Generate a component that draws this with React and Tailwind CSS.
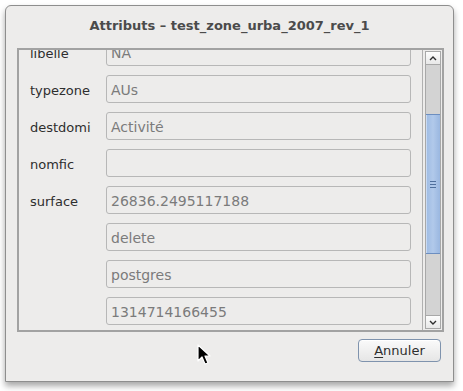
import React from "react";

const rows = [
  { label: "libelle", value: "NA" },
  { label: "typezone", value: "AUs" },
  { label: "destdomi", value: "Activité" },
  { label: "nomfic", value: "" },
  { label: "surface", value: "26836.2495117188" },
  { label: "", value: "delete" },
  { label: "", value: "postgres" },
  { label: "", value: "1314714166455" },
];

const Cursor = () => (
  <svg className="absolute left-[197px] top-[344px]" width="16" height="22" viewBox="0 0 16 22">
    <path d="M1 1 L1 17 L5 13 L8 20 L11 19 L8 12 L13 12 Z" fill="#000" stroke="#fff" strokeWidth="1.2" strokeLinejoin="round" />
  </svg>
);

const Scrollbar = () => (
  <div className="w-[16px] my-[1px] mr-[1px] flex flex-col border border-[#a8a8a8] bg-[#d3d3d3]">
    <div className="h-[13px] flex items-center justify-center bg-gradient-to-b from-[#fdfdfd] to-[#e8e8e8] border-b border-[#a8a8a8]">
      <svg width="8" height="5" viewBox="0 0 8 5">
        <path d="M1 4 L4 1 L7 4" fill="none" stroke="#2e2e2e" strokeWidth="1.4" />
      </svg>
    </div>
    <div className="h-[49px]" />
    <div className="h-[140px] flex items-center justify-center bg-gradient-to-r from-[#9ebbe3] via-[#b1c9ea] to-[#9ab7e0] border-y border-[#6c8ec0] shadow-[inset_1px_0_0_#c9daf2]">
      <div className="flex flex-col gap-[2px]">
        <div className="w-[6px] h-px bg-[#4f6f9c]" />
        <div className="w-[6px] h-px bg-[#4f6f9c]" />
        <div className="w-[6px] h-px bg-[#4f6f9c]" />
      </div>
    </div>
    <div className="flex-1" />
    <div className="h-[13px] flex items-center justify-center bg-gradient-to-b from-[#fdfdfd] to-[#e8e8e8] border-t border-[#a8a8a8]">
      <svg width="8" height="5" viewBox="0 0 8 5">
        <path d="M1 1 L4 4 L7 1" fill="none" stroke="#2e2e2e" strokeWidth="1.4" />
      </svg>
    </div>
  </div>
);

export default function App() {
  return (
    <div
      className="relative w-[463px] h-[391px] bg-white overflow-hidden"
      style={{ fontFamily: '"DejaVu Sans", sans-serif' }}
    >
      <div className="ml-[5px] mt-[5px] w-[449px] h-[377px] flex flex-col bg-[#edeceb] border border-[#8e8e8e] rounded-t-[6px] shadow-[0_4px_6px_rgba(0,0,0,0.35)]">
        <div className="h-[42px] flex items-start justify-center pt-[10px] text-[13px] font-bold text-[#4b4b4b]">
          Attributs – test_zone_urba_2007_rev_1
        </div>
        <div className="ml-[11px] mr-[9px] h-[284px] flex border-2 border-[#a2a2a2]">
          <div className="flex-1 overflow-hidden border-r border-[#b0b0b0]">
            <div className="mt-[-12px] flex flex-col gap-[9px] pl-[11px] pr-[11px]">
              {rows.map((r, i) => (
                <div key={i} className="flex items-center h-[28px]">
                  <div className="w-[76px] pt-[4px] text-[13px] text-[#2e2e2e]">{r.label}</div>
                  <div className="flex-1 h-[28px] flex items-center px-[4px] pt-[2px] rounded-[3px] border border-[#b7b7b7] bg-[#edeceb] text-[14px] text-[#7b7b7b]">
                    {r.value}
                  </div>
                </div>
              ))}
            </div>
          </div>
          <div className="w-[2px]" />
          <Scrollbar />
        </div>
        <div className="flex justify-end pr-[12px] pt-[7px]">
          <button className="w-[83px] h-[23px] rounded-[4px] border border-[#7f93ad] bg-gradient-to-b from-[#fafafa] to-[#e6e6e6] text-[13px] text-[#2e2e2e] shadow-[inset_0_1px_0_#ffffff]">
            <span className="underline underline-offset-2">A</span>nnuler
          </button>
        </div>
      </div>
      <Cursor />
    </div>
  );
}
